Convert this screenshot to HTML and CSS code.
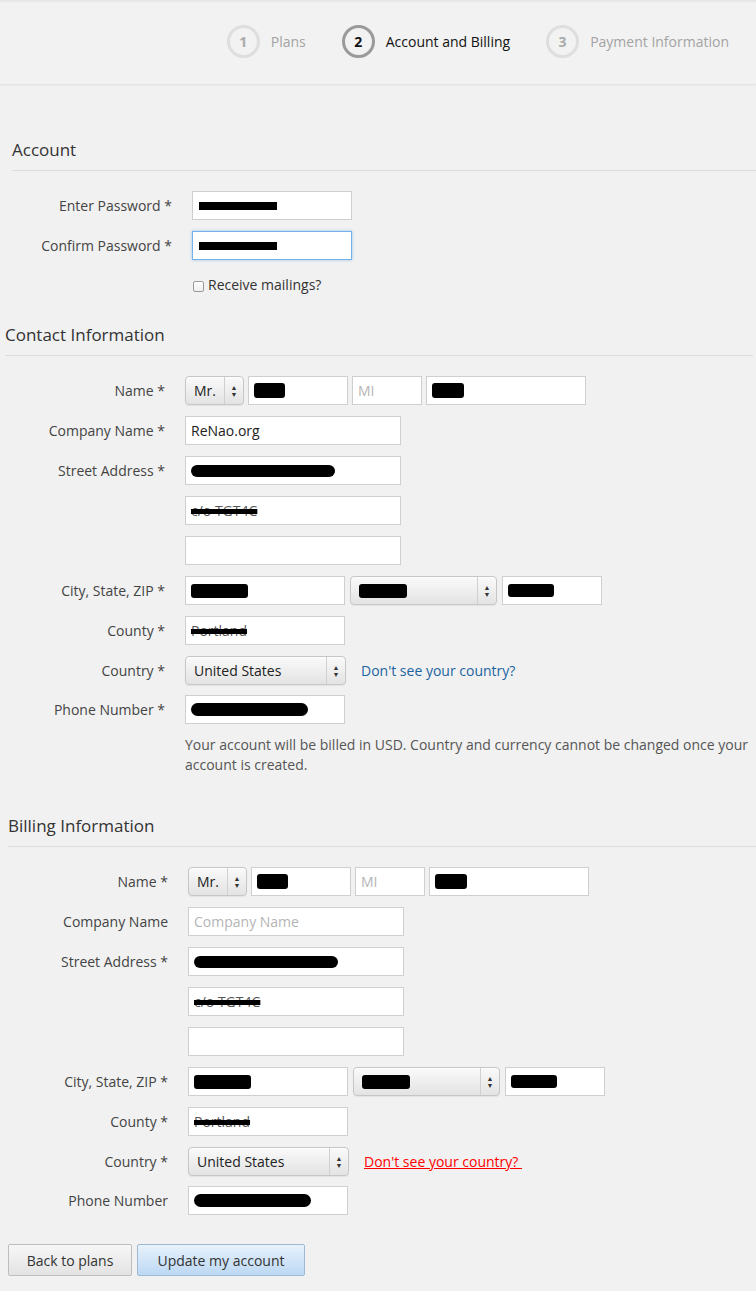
FILE: index.html
```html
<!DOCTYPE html>
<html>
<head>
<meta charset="utf-8">
<link rel="stylesheet" href="styles.css">
</head>
<body>
<header class="steps">
  <div class="step done"><span class="circle">1</span><span class="step-label">Plans</span></div>
  <div class="step active"><span class="circle">2</span><span class="step-label">Account and Billing</span></div>
  <div class="step"><span class="circle">3</span><span class="step-label">Payment Information</span></div>
</header>

<section class="section sec-account">
  <h2 class="sec-title">Account</h2>
  <div class="rows">
    <div class="row"><label class="lbl">Enter Password *</label><div class="ctl"><div class="input w160"><span class="redact r-pass"></span></div></div></div>
    <div class="row"><label class="lbl">Confirm Password *</label><div class="ctl"><div class="input w160 focus"><span class="redact r-pass"></span></div></div></div>
    <div class="row check-row"><span class="lbl"></span><div class="ctl"><span class="checkbox"></span><span class="check-text">Receive mailings?</span></div></div>
  </div>
</section>

<section class="section sec-contact">
  <h2 class="sec-title">Contact Information</h2>
  <div class="rows">
    <div class="row"><label class="lbl">Name *</label>
      <div class="ctl name-ctl">
        <div class="select w-title"><span class="sel-text">Mr.</span><span class="sel-arrow"><span>&#9650;</span><span>&#9660;</span></span></div>
        <div class="input w100"><span class="redact r-first"></span></div>
        <div class="input w70"><span class="ph">MI</span></div>
        <div class="input w160"><span class="redact r-last"></span></div>
      </div>
    </div>
    <div class="row"><label class="lbl">Company Name *</label><div class="ctl"><div class="input w216"><span class="val">ReNao.org</span></div></div></div>
    <div class="row"><label class="lbl">Street Address *</label><div class="ctl"><div class="input w216"><span class="redact r-street"></span></div></div></div>
    <div class="row"><span class="lbl"></span><div class="ctl"><div class="input w216"><span class="val struck">c/o TGT4C</span></div></div></div>
    <div class="row"><span class="lbl"></span><div class="ctl"><div class="input w216"></div></div></div>
    <div class="row"><label class="lbl">City, State, ZIP *</label>
      <div class="ctl city-ctl">
        <div class="input w160"><span class="redact r-city"></span></div>
        <div class="select w-state"><span class="sel-text"><span class="redact r-state"></span></span><span class="sel-arrow"><span>&#9650;</span><span>&#9660;</span></span></div>
        <div class="input w100"><span class="redact r-zip"></span></div>
      </div>
    </div>
    <div class="row"><label class="lbl">County *</label><div class="ctl"><div class="input w160"><span class="val struck">Portland</span></div></div></div>
    <div class="row tight"><label class="lbl">Country *</label>
      <div class="ctl country-ctl">
        <div class="select w-country"><span class="sel-text">United States</span><span class="sel-arrow"><span>&#9650;</span><span>&#9660;</span></span></div>
        <a class="link-blue" href="#">Don't see your country?</a>
      </div>
    </div>
    <div class="row"><label class="lbl">Phone Number *</label><div class="ctl"><div class="input w160"><span class="redact r-phone"></span></div></div></div>
    <div class="row help-row"><span class="lbl"></span><p class="help">Your account will be billed in USD. Country and currency cannot be changed once your account is created.</p></div>
  </div>
</section>

<section class="section sec-billing">
  <h2 class="sec-title">Billing Information</h2>
  <div class="rows">
    <div class="row"><label class="lbl">Name *</label>
      <div class="ctl name-ctl">
        <div class="select w-title"><span class="sel-text">Mr.</span><span class="sel-arrow"><span>&#9650;</span><span>&#9660;</span></span></div>
        <div class="input w100"><span class="redact r-first"></span></div>
        <div class="input w70"><span class="ph">MI</span></div>
        <div class="input w160"><span class="redact r-last"></span></div>
      </div>
    </div>
    <div class="row"><label class="lbl">Company Name</label><div class="ctl"><div class="input w216"><span class="ph">Company Name</span></div></div></div>
    <div class="row"><label class="lbl">Street Address *</label><div class="ctl"><div class="input w216"><span class="redact r-street"></span></div></div></div>
    <div class="row"><span class="lbl"></span><div class="ctl"><div class="input w216"><span class="val struck">c/o TGT4C</span></div></div></div>
    <div class="row"><span class="lbl"></span><div class="ctl"><div class="input w216"></div></div></div>
    <div class="row"><label class="lbl">City, State, ZIP *</label>
      <div class="ctl city-ctl">
        <div class="input w160"><span class="redact r-city"></span></div>
        <div class="select w-state"><span class="sel-text"><span class="redact r-state"></span></span><span class="sel-arrow"><span>&#9650;</span><span>&#9660;</span></span></div>
        <div class="input w100"><span class="redact r-zip"></span></div>
      </div>
    </div>
    <div class="row"><label class="lbl">County *</label><div class="ctl"><div class="input w160"><span class="val struck">Portland</span></div></div></div>
    <div class="row tight"><label class="lbl">Country *</label>
      <div class="ctl country-ctl">
        <div class="select w-country"><span class="sel-text">United States</span><span class="sel-arrow"><span>&#9650;</span><span>&#9660;</span></span></div>
        <a class="link-red" href="#">Don't see your country? </a>
      </div>
    </div>
    <div class="row"><label class="lbl">Phone Number</label><div class="ctl"><div class="input w160"><span class="redact r-phone"></span></div></div></div>
  </div>
</section>

<div class="actions">
  <button class="btn btn-gray">Back to plans</button>
  <button class="btn btn-blue">Update my account</button>
</div>
</body>
</html>
```

FILE: styles.css
```css
* { box-sizing: border-box; }
html, body { margin: 0; padding: 0; }
body {
  background: #f1f1f1;
  font-family: "Open Sans", "Liberation Sans", sans-serif;
  font-size: 14px;
  color: #444;
  width: 756px;
  overflow: hidden;
}

/* header steps */
.steps {
  height: 85px;
  display: flex;
  justify-content: flex-end;
  align-items: center;
  gap: 36px;
  padding-right: 27px;
  padding-bottom: 1px;
  background: #f2f2f2;
  border-bottom: 1px solid #e4e4e4;
  box-shadow: inset 0 3px 3px -2px rgba(0,0,0,0.08), 0 1px 2px rgba(0,0,0,0.03);
}
.step { display: flex; align-items: center; gap: 11px; }
.circle {
  width: 33px; height: 33px;
  border-radius: 50%;
  border: 3px solid #dedede;
  display: flex; align-items: center; justify-content: center;
  font-weight: 700;
  font-size: 14px;
  color: #aaa;
}
.step-label { color: #a3a3a3; font-size: 14px; }
.step.active .circle { border-color: #9a9a9a; color: #111; }
.step.active .step-label { color: #111; }

/* sections */
.sec-account { margin-left: 12px; padding-top: 53px; }
.sec-contact { margin-left: 5px; margin-right: 3px; padding-top: 17px; }
.sec-billing { margin-left: 8px; padding-top: 28px; }
.sec-title {
  margin: 0;
  font-size: 17px;
  font-weight: 400;
  line-height: 24px;
  color: #333;
  padding-bottom: 8px;
  border-bottom: 1px solid #dcdcdc;
}
.rows { padding-top: 20px; }
.row {
  display: grid;
  grid-template-columns: 160px 1fr;
  column-gap: 20px;
  align-items: center;
  margin-bottom: 11px;
}
.row.tight { margin-bottom: 10px; }
.lbl { text-align: right; color: #444; font-size: 14px; line-height: 20px; }
.ctl { display: flex; align-items: center; }

.input {
  height: 29px;
  background: #fff;
  border: 1px solid #cfcfcf;
  display: flex;
  align-items: center;
  padding: 0 5px;
  font-size: 14px;
  color: #222;
  overflow: hidden;
  white-space: nowrap;
}
.input.focus {
  border-color: #74b1ea;
  box-shadow: 0 0 3px rgba(90,160,230,0.55);
}
.w70 { width: 70px; }
.w100 { width: 100px; }
.w160 { width: 160px; }
.w216 { width: 216px; }
.ph { color: #b5b5b5; }
.val { color: #222; }
.struck {
  color: #555;
  text-decoration: line-through;
  text-decoration-color: #000;
  text-decoration-thickness: 5px;
}

.redact { display: inline-block; background: #000; border-radius: 3px; }
.r-pass { width: 78px; height: 8px; border-radius: 0; margin-left: 1px; }
.r-first { width: 31px; height: 15px; }
.r-last { width: 32px; height: 15px; }
.r-street { width: 144px; height: 12px; border-radius: 6px; }
.r-city { width: 57px; height: 14px; }
.r-state { width: 48px; height: 14px; }
.r-zip { width: 46px; height: 13px; }
.r-phone { width: 117px; height: 13px; border-radius: 7px; }

.select {
  height: 29px;
  display: flex;
  align-items: stretch;
  border: 1px solid #c6c6c6;
  border-radius: 4px;
  background: linear-gradient(#fafafa, #e3e3e3);
  box-shadow: inset 0 1px 1px rgba(255,255,255,0.9), 0 1px 1px rgba(0,0,0,0.06);
  color: #222;
  font-size: 14px;
}
.sel-text {
  flex: 1;
  display: flex;
  align-items: center;
  padding-left: 8px;
  white-space: nowrap;
  overflow: hidden;
}
.sel-arrow {
  width: 19px;
  border-left: 1px solid #d0d0d0;
  display: flex;
  flex-direction: column;
  align-items: center;
  justify-content: center;
  font-size: 7px;
  line-height: 7px;
  color: #333;
}
.w-title { width: 59px; }
.w-state { width: 147px; }
.w-country { width: 161px; }

.name-ctl { gap: 4px; }
.city-ctl { gap: 5px; }
.country-ctl { gap: 15px; }
.link-blue { color: #1b64a0; text-decoration: none; font-size: 14px; }
.link-red { color: #f00; text-decoration: underline; font-size: 14px; white-space: pre; }

.check-row { margin-top: 15px; }
.check-row .ctl { align-items: flex-start; }
.checkbox {
  width: 11px; height: 11px;
  margin-top: 6px;
  margin-left: 1px;
  border: 1px solid #9a9a9a;
  border-radius: 2px;
  background: linear-gradient(#fff, #eee);
}
.check-text { margin-left: 4px; line-height: 20px; color: #333; }

.help {
  margin: 0;
  color: #555;
  line-height: 20px;
  font-size: 14px;
}

.actions {
  display: flex;
  gap: 5px;
  margin: 29px 0 0 8px;
}
.btn {
  font-family: "Open Sans", "Liberation Sans", sans-serif;
  font-size: 14px;
  height: 32px;
  padding: 0;
  white-space: nowrap;
  color: #333;
  border-radius: 2px;
  cursor: pointer;
}
.btn-gray {
  width: 124px;
  border: 1px solid #bdbdbd;
  background: linear-gradient(#f7f7f7, #e3e3e3);
}
.btn-blue {
  width: 168px;
  border: 1px solid #9fb9d3;
  background: linear-gradient(#e7f2fc, #bcd8f3);
}
```
